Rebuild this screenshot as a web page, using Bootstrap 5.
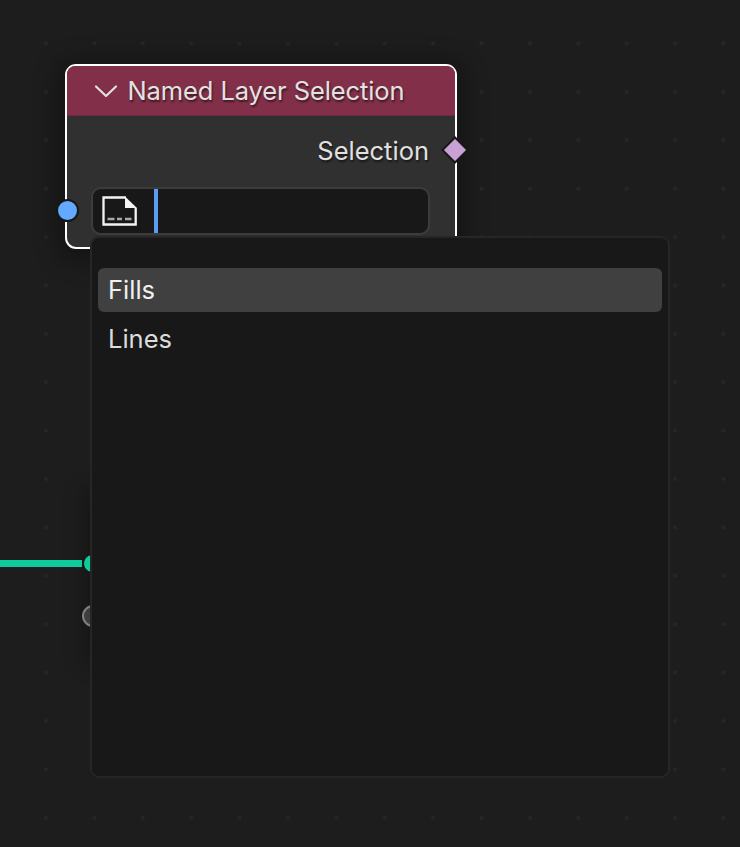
<!DOCTYPE html>
<html lang="en">
<head>
<meta charset="utf-8">
<title>Named Layer Selection</title>
<link rel="stylesheet" href="https://cdn.jsdelivr.net/npm/bootstrap@5.3.0/dist/css/bootstrap.min.css">
<style>
html,body{height:100%;margin:0;overflow:hidden}
body{background-color:#1d1d1d;background-image:radial-gradient(circle,#262626 0,#262626 1.6px,transparent 2.4px);background-size:48.4px 48.4px;background-position:21.8px 19.3px;font-family:Inter,"Liberation Sans",sans-serif;color:#e0e0e0;position:relative}
.bn-node{position:absolute;left:65px;top:64px;width:392px;height:185px;background:#303030;border:2px solid #fff;border-radius:11px;box-shadow:0 4px 24px 8px rgba(0,0,0,.32)}
.bn-head{height:50px;background:#823049;border-bottom:1px solid #6b2a3e;border-radius:8px 8px 0 0;padding:1px 0 0 27px;gap:9.5px;font-size:25.5px;letter-spacing:-.1px;text-shadow:1px 2px 2px rgba(0,0,0,.55);color:#e2e2e2}
.bn-out{height:70px;padding:1px 26px 0 0;font-size:25.5px;text-shadow:1px 2px 2px rgba(0,0,0,.55)}
.bn-field{position:absolute;left:24px;top:121px;width:339px;height:48px;background:#181818;border:2px solid #3c3c3c;border-radius:10px;padding-left:9px}
.bn-caret{width:4px;height:44px;background:#5d9cf5;margin-left:17px}
.bn-sock-in{position:absolute;left:-11px;top:133px;width:23px;height:23px;border-radius:50%;background:#63a9ff;border:2px solid #171717}
.bn-sock-out{position:absolute;left:374px;top:70px;width:28px;height:28px}
.bn-ghost{position:absolute;left:92px;top:495px;width:300px;height:165px;box-shadow:-4px 0 20px 4px rgba(0,0,0,.28)}
.bn-wire{position:absolute;left:0;top:560px;width:82px;height:7px;background:#0fcb9c}
.bn-dot-a{position:absolute;left:83px;top:554px;width:19px;height:19px;border-radius:50%;background:#0fcb9c;border:1px solid #171717}
.bn-dot-b{position:absolute;left:82px;top:605px;width:22px;height:22px;border-radius:50%;background:#3e3e3e;border:2px solid #808080}
.bn-pop{position:absolute;left:90px;top:236px;width:580px;height:542px;background:#181818;border:2px solid #262626;border-radius:9px;padding:30px 6px 0;font-size:25.5px;line-height:1}
.bn-item{height:44px;padding-left:10px;border-radius:6px;color:#dcdcdc;margin-bottom:5px}
.bn-item-on{background:#404040;color:#f0f0f0}
</style>
</head>
<body>
<div class="bn-ghost"></div>
<div class="bn-wire"></div>
<div class="bn-dot-a"></div>
<div class="bn-dot-b"></div>

<div class="bn-node">
  <div class="bn-head d-flex align-items-center">
    <svg width="24" height="14" viewBox="0 0 24 14" fill="none" stroke="#e2e2e2" stroke-width="2.2" stroke-linecap="round" stroke-linejoin="round"><path d="M2 2.500 L12 12 L22 2.500"/></svg>
    <span>Named Layer Selection</span>
  </div>
  <div class="bn-out d-flex align-items-center justify-content-end"><span>Selection</span></div>
  <div class="bn-field d-flex align-items-center">
    <svg width="35" height="30" viewBox="0 0 35 30" fill="none"><path d="M24 1.500 H1.500 V28.500 H33.700 V12" stroke="#f4f4f4" stroke-width="2.300"/><path d="M23 .5 L35 12 H23 Z" fill="#f4f4f4"/><path d="M5.500 23 H12.500 M15 23 H20 M23 23 H29.500" stroke="#a8a8a8" stroke-width="2.600"/></svg>
    <div class="bn-caret"></div>
  </div>
  <div class="bn-sock-in"></div>
  <svg class="bn-sock-out" viewBox="0 0 28 28"><path d="M14 1.500 L26.500 14 L14 26.500 L1.500 14 Z" fill="#c9a2d5" stroke="#171717" stroke-width="2"/></svg>
</div>

<div class="bn-pop">
  <div class="bn-item bn-item-on d-flex align-items-center">Fills</div>
  <div class="bn-item d-flex align-items-center">Lines</div>
</div>
<script src="https://cdn.jsdelivr.net/npm/bootstrap@5.3.0/dist/js/bootstrap.bundle.min.js"></script>
</body>
</html>
